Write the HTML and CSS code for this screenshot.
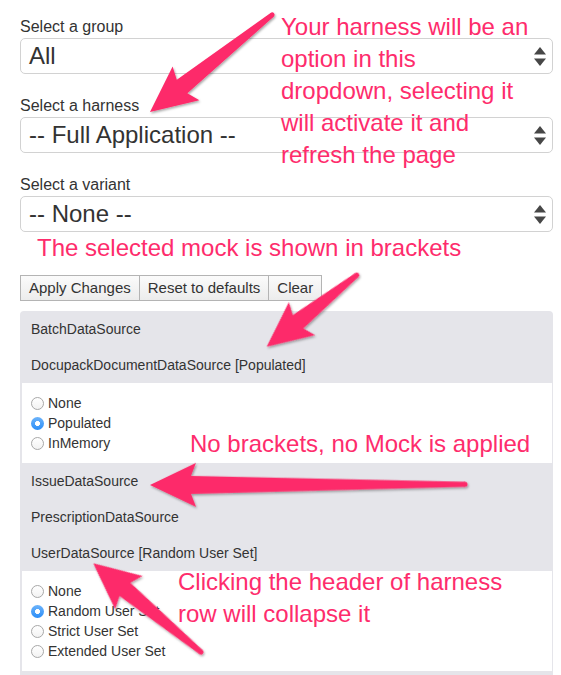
FILE: index.html
```html
<!DOCTYPE html>
<html lang="en">
<head>
<meta charset="utf-8">
<title>Harness selector</title>
<link rel="stylesheet" href="styles.css">
</head>
<body>
<div class="page">
  <div class="field">
    <div class="field-label">Select a group</div>
    <div class="select"><span class="select-value">All</span>
      <svg class="select-arrows" width="12" height="19" viewBox="0 0 12 19"><polygon points="0,7.5 6,0 12,7.5"/><polygon points="0,11.5 12,11.5 6,19"/></svg>
    </div>
  </div>
  <div class="field">
    <div class="field-label">Select a harness</div>
    <div class="select"><span class="select-value">-- Full Application --</span>
      <svg class="select-arrows" width="12" height="19" viewBox="0 0 12 19"><polygon points="0,7.5 6,0 12,7.5"/><polygon points="0,11.5 12,11.5 6,19"/></svg>
    </div>
  </div>
  <div class="field">
    <div class="field-label">Select a variant</div>
    <div class="select"><span class="select-value">-- None --</span>
      <svg class="select-arrows" width="12" height="19" viewBox="0 0 12 19"><polygon points="0,7.5 6,0 12,7.5"/><polygon points="0,11.5 12,11.5 6,19"/></svg>
    </div>
  </div>

  <div class="toolbar">
    <button class="btn">Apply Changes</button>
    <button class="btn">Reset to defaults</button>
    <button class="btn">Clear</button>
  </div>

  <div class="panel">
    <div class="row-head">BatchDataSource</div>
    <div class="row-head">DocupackDocumentDataSource [Populated]</div>
    <div class="row-body">
      <div class="radio-line"><span class="radio"></span>None</div>
      <div class="radio-line"><span class="radio radio-on"></span>Populated</div>
      <div class="radio-line"><span class="radio"></span>InMemory</div>
    </div>
    <div class="row-head">IssueDataSource</div>
    <div class="row-head">PrescriptionDataSource</div>
    <div class="row-head">UserDataSource [Random User Set]</div>
    <div class="row-body">
      <div class="radio-line"><span class="radio"></span>None</div>
      <div class="radio-line"><span class="radio radio-on"></span>Random User Set</div>
      <div class="radio-line"><span class="radio"></span>Strict User Set</div>
      <div class="radio-line"><span class="radio"></span>Extended User Set</div>
    </div>
    <div class="row-head">&nbsp;</div>
  </div>

  <div class="notes">
    <div class="note note-harness">Your harness will be an<br>option in this<br>dropdown, selecting it<br>will activate it and<br>refresh the page</div>
    <div class="note note-brackets">The selected mock is shown in brackets</div>
    <div class="note note-none">No brackets, no Mock is applied</div>
    <div class="note note-collapse">Clicking the header of harness<br>row will collapse it</div>
    <svg class="arrows" width="561" height="675" viewBox="0 0 561 675">
      <defs>
        <filter id="shadow" x="-20%" y="-20%" width="140%" height="140%">
          <feDropShadow dx="1" dy="1.5" stdDeviation="1" flood-color="#000" flood-opacity="0.35"/>
        </filter>
      </defs>
      <g class="arrow" filter="url(#shadow)">
        <g transform="translate(150 112) rotate(-38.5)">
          <polygon points="0,0 46,-21.5 41,-8.5 156,-2.5 156,2.5 41,8.5 46,21.5"/>
          <circle cx="156" cy="0" r="2.5"/>
        </g>
        <g transform="translate(266.7 346.7) rotate(-38.5)">
          <polygon points="0,0 45,-21 40,-8.5 115,-2.5 115,2.5 40,8.5 45,21"/>
          <circle cx="115" cy="0" r="2.5"/>
        </g>
        <g transform="translate(150 485) rotate(-0.13)">
          <polygon points="0,0 46,-22 41,-9 315,-2.5 315,2.5 41,9 46,22"/>
          <circle cx="315" cy="0" r="2.5"/>
        </g>
        <g transform="translate(93.3 563.3) rotate(39.5)">
          <polygon points="0,0 46,-21.5 41,-8.5 139.5,-2.5 139.5,2.5 41,8.5 46,21.5"/>
          <circle cx="139.5" cy="0" r="2.5"/>
        </g>
      </g>
    </svg>
  </div>
</div>
</body>
</html>
```

FILE: styles.css
```css
html, body {
  margin: 0;
  padding: 0;
  background: #ffffff;
}

body {
  font-family: "Liberation Sans", Arial, Helvetica, sans-serif;
  color: #333333;
}

.page {
  position: relative;
  width: 561px;
  height: 675px;
  overflow: hidden;
  box-sizing: border-box;
  padding: 17px 8px 0 20px;
}

.field {
  display: flex;
  flex-direction: column;
  margin-bottom: 22px;
}

.field:nth-child(3) {
  margin-bottom: 0;
}

.field-label {
  font-size: 16px;
  line-height: 20px;
  height: 20px;
  margin-bottom: 1px;
  color: #333333;
}

.select {
  display: flex;
  align-items: center;
  justify-content: space-between;
  box-sizing: border-box;
  height: 36px;
  padding: 0 6px 0 8px;
  border: 1px solid #d2d2d2;
  border-radius: 5px;
  background: #ffffff;
}

.select-value {
  font-size: 24px;
  line-height: 28px;
  color: #333333;
}

.select-arrows {
  fill: #474747;
  display: block;
}

.toolbar {
  display: flex;
  margin-top: 43px;
}

.btn {
  font-family: "Liberation Sans", Arial, Helvetica, sans-serif;
  font-size: 15px;
  color: #333333;
  height: 26px;
  padding: 0 8px;
  margin: 0;
  border: 1px solid #b4b4b4;
  background: linear-gradient(#fbfbfb, #ececec);
  border-radius: 0;
  line-height: 24px;
}

.btn + .btn {
  margin-left: -1px;
}

.panel {
  margin-top: 10px;
  background: #e5e5ea;
  border-radius: 4px 4px 0 0;
  padding: 0 1px;
}

.row-head {
  height: 36px;
  line-height: 36px;
  font-size: 14px;
  padding-left: 10px;
  color: #333333;
}

.row-body {
  background: #ffffff;
  padding: 10px 0 10px 9px;
  margin-left: 1px;
}

.radio-line {
  display: flex;
  align-items: center;
  height: 20px;
  font-size: 14px;
  color: #333333;
}

.radio {
  box-sizing: border-box;
  width: 13px;
  height: 13px;
  border-radius: 50%;
  border: 1px solid #a8a8a8;
  background: linear-gradient(#ffffff, #f2f2f2);
  margin-right: 4px;
  flex: none;
}

.radio-on {
  border: none;
  background: radial-gradient(circle, #ffffff 0 2.2px, transparent 2.7px), linear-gradient(#6cb3fa, #2c8ef8);
}

.notes {
  position: absolute;
  left: 0;
  top: 0;
  width: 561px;
  height: 675px;
  pointer-events: none;
}

.note {
  position: absolute;
  color: #fe2c6c;
  font-size: 24px;
  line-height: 32px;
  white-space: nowrap;
}

.note-harness {
  left: 281px;
  top: 11px;
}

.note-brackets {
  left: 37px;
  top: 232px;
}

.note-none {
  left: 190px;
  top: 428px;
}

.note-collapse {
  left: 178px;
  top: 566px;
}

.arrows {
  position: absolute;
  left: 0;
  top: 0;
}

.arrow {
  fill: #fd2c6a;
}
```
